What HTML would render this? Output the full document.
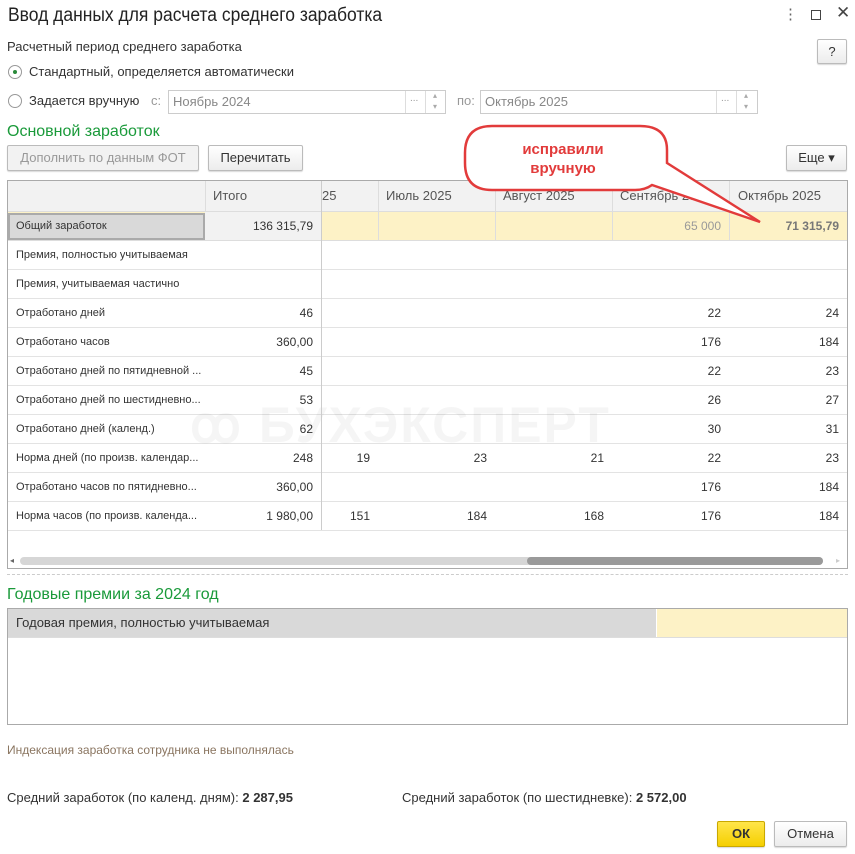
<!DOCTYPE html>
<html><head><meta charset="utf-8"><style>
*{box-sizing:border-box;margin:0;padding:0}
body{width:855px;height:854px;background:#fff;font-family:"Liberation Sans",Arial,sans-serif;font-size:13px;color:#333;position:relative;overflow:hidden}
.a{position:absolute;white-space:nowrap}
.btn{position:absolute;border:1px solid #bbb;border-radius:2px;background:linear-gradient(#fff,#ececec);box-shadow:0 1px 1px rgba(0,0,0,.15);text-align:center;font-size:13px;color:#333}
.inp{position:absolute;border:1px solid #ccc;background:#fff;height:24px;color:#888;padding:3px 4px;font-size:13px}
.row{position:absolute;left:8px;width:839px;height:29px;border-bottom:1px solid #e3e3e3}
.c{position:absolute;top:0;height:29px;line-height:29px;font-size:12px;color:#333}
.l{left:8px;font-size:11px}
.r{text-align:right;padding-right:8px}
.vl{position:absolute;width:1px;background:#ddd;z-index:2}
</style></head><body>
<div class="a" style="left:8px;top:5px;font-size:19px;color:#222;transform:scaleX(.92);transform-origin:left">Ввод данных для расчета среднего заработка</div>
<div class="a" style="left:783px;top:5px;font-size:15px;color:#666">⋮</div>
<div class="a" style="left:811px;top:10px;width:10px;height:10px;border:1px solid #444"></div>
<div class="a" style="left:836px;top:3px;font-size:17px;color:#444">✕</div>
<div class="a" style="left:7px;top:39px">Расчетный период среднего заработка</div>
<div class="btn" style="left:817px;top:39px;width:30px;height:25px;line-height:23px">?</div>
<div class="a" style="left:8px;top:65px;width:14px;height:14px;border:1px solid #999;border-radius:50%"><div style="position:absolute;left:4px;top:4px;width:4px;height:4px;border-radius:50%;background:#2a8a3a"></div></div>
<div class="a" style="left:29px;top:64px">Стандартный, определяется автоматически</div>
<div class="a" style="left:8px;top:94px;width:14px;height:14px;border:1px solid #999;border-radius:50%"></div>
<div class="a" style="left:29px;top:93px">Задается вручную</div>
<div class="a" style="left:151px;top:93px;color:#999">с:</div>
<div class="inp" style="left:168px;top:90px;width:278px">Ноябрь 2024</div>
<div class="a" style="left:405px;top:91px;width:1px;height:22px;background:#ddd"></div><div class="a" style="left:410px;top:93px;color:#999;font-size:10px">...</div>
<div class="a" style="left:425px;top:91px;width:1px;height:22px;background:#ddd"></div><div class="a" style="left:433px;top:90px;color:#aaa;font-size:8px;line-height:11px">▴<br>▾</div>
<div class="a" style="left:457px;top:93px;color:#999">по:</div>
<div class="inp" style="left:480px;top:90px;width:278px">Октябрь 2025</div>
<div class="a" style="left:716px;top:91px;width:1px;height:22px;background:#ddd"></div><div class="a" style="left:721px;top:93px;color:#999;font-size:10px">...</div>
<div class="a" style="left:736px;top:91px;width:1px;height:22px;background:#ddd"></div><div class="a" style="left:744px;top:90px;color:#aaa;font-size:8px;line-height:11px">▴<br>▾</div>
<div class="a" style="left:7px;top:123px;font-size:16px;color:#1a9a3a">Основной заработок</div>
<div class="btn" style="left:7px;top:145px;width:192px;height:26px;line-height:24px;color:#999;background:#f2f2f2">Дополнить по данным ФОТ</div>
<div class="btn" style="left:208px;top:145px;width:95px;height:26px;line-height:24px">Перечитать</div>
<div class="btn" style="left:786px;top:145px;width:61px;height:26px;line-height:24px">Еще ▾</div>

<div class="a" style="left:7px;top:180px;width:841px;height:389px;border:1px solid #aaa"></div>
<div class="a" style="left:8px;top:181px;width:839px;height:31px;background:#f2f2f2;border-bottom:1px solid #ddd"></div>
<div class="vl" style="left:205px;top:181px;height:31px"></div>
<div class="vl" style="left:321px;top:181px;height:349px;background:#ccc"></div>
<div class="vl" style="left:378px;top:181px;height:59px"></div>
<div class="vl" style="left:495px;top:181px;height:59px"></div>
<div class="vl" style="left:612px;top:181px;height:59px"></div>
<div class="vl" style="left:729px;top:181px;height:59px"></div>
<div class="a" style="left:213px;top:188px;color:#555">Итого</div>
<div class="a" style="left:322px;top:188px;color:#555">25</div>
<div class="a" style="left:386px;top:188px;color:#555">Июль 2025</div>
<div class="a" style="left:503px;top:188px;color:#555">Август 2025</div>
<div class="a" style="left:620px;top:188px;color:#555">Сентябрь 2025</div>
<div class="a" style="left:738px;top:188px;color:#555">Октябрь 2025</div>

<div class="row" style="top:212px;background:#fdf2c6">
<div class="c" style="left:0;width:197px;background:#d9d9d9;border:2px solid #aaa;height:27px;line-height:23px;padding-left:6px;font-size:11px;top:1px">Общий заработок</div>
<div class="c r" style="left:197px;width:116px;background:#f2f2f2">136 315,79</div>
<div class="c r" style="left:604px;width:117px;color:#999">65 000</div>
<div class="c r" style="left:721px;width:118px;color:#777;font-weight:bold">71 315,79</div>
</div>
<div class="a" style="left:8px;top:240px;width:839px;height:1px;background:#ddd"></div>

<div class="row" style="top:241px"><div class="c l">Премия, полностью учитываемая</div></div>
<div class="row" style="top:270px"><div class="c l">Премия, учитываемая частично</div></div>
<div class="row" style="top:299px"><div class="c l">Отработано дней</div><div class="c r" style="left:197px;width:116px">46</div><div class="c r" style="left:604px;width:117px">22</div><div class="c r" style="left:721px;width:118px">24</div></div>
<div class="row" style="top:328px"><div class="c l">Отработано часов</div><div class="c r" style="left:197px;width:116px">360,00</div><div class="c r" style="left:604px;width:117px">176</div><div class="c r" style="left:721px;width:118px">184</div></div>
<div class="row" style="top:357px"><div class="c l">Отработано дней по пятидневной ...</div><div class="c r" style="left:197px;width:116px">45</div><div class="c r" style="left:604px;width:117px">22</div><div class="c r" style="left:721px;width:118px">23</div></div>
<div class="row" style="top:386px"><div class="c l">Отработано дней по шестидневно...</div><div class="c r" style="left:197px;width:116px">53</div><div class="c r" style="left:604px;width:117px">26</div><div class="c r" style="left:721px;width:118px">27</div></div>
<div class="row" style="top:415px"><div class="c l">Отработано дней (календ.)</div><div class="c r" style="left:197px;width:116px">62</div><div class="c r" style="left:604px;width:117px">30</div><div class="c r" style="left:721px;width:118px">31</div></div>
<div class="row" style="top:444px"><div class="c l">Норма дней (по произв. календар...</div><div class="c r" style="left:197px;width:116px">248</div><div class="c r" style="left:313px;width:57px">19</div><div class="c r" style="left:370px;width:117px">23</div><div class="c r" style="left:487px;width:117px">21</div><div class="c r" style="left:604px;width:117px">22</div><div class="c r" style="left:721px;width:118px">23</div></div>
<div class="row" style="top:473px"><div class="c l">Отработано часов по пятидневно...</div><div class="c r" style="left:197px;width:116px">360,00</div><div class="c r" style="left:604px;width:117px">176</div><div class="c r" style="left:721px;width:118px">184</div></div>
<div class="row" style="top:502px"><div class="c l">Норма часов (по произв. календа...</div><div class="c r" style="left:197px;width:116px">1 980,00</div><div class="c r" style="left:313px;width:57px">151</div><div class="c r" style="left:370px;width:117px">184</div><div class="c r" style="left:487px;width:117px">168</div><div class="c r" style="left:604px;width:117px">176</div><div class="c r" style="left:721px;width:118px">184</div></div>

<div class="a" style="left:190px;top:396px;font-size:50px;font-weight:bold;color:#000;opacity:.035;letter-spacing:2px">ꝏ БУХЭКСПЕРТ</div>

<div class="a" style="left:10px;top:556px;font-size:8px;color:#666">◂</div>
<div class="a" style="left:20px;top:557px;width:803px;height:8px;border-radius:4px;background:#d6d6d6"></div>
<div class="a" style="left:527px;top:557px;width:296px;height:8px;border-radius:4px;background:#9a9a9a"></div>
<div class="a" style="left:836px;top:556px;font-size:8px;color:#ccc">▸</div>
<div class="a" style="left:7px;top:574px;width:841px;border-top:1px dashed #ccc"></div>

<div class="a" style="left:7px;top:586px;font-size:16px;color:#1a9a3a">Годовые премии за 2024 год</div>
<div class="a" style="left:7px;top:608px;width:841px;height:117px;border:1px solid #aaa"></div>
<div class="a" style="left:8px;top:609px;width:648px;height:28px;background:#d9d9d9;line-height:28px;padding-left:8px;font-size:13px">Годовая премия, полностью учитываемая</div>
<div class="a" style="left:657px;top:609px;width:190px;height:28px;background:#fdf2c6"></div>
<div class="a" style="left:8px;top:637px;width:839px;height:1px;background:#ddd"></div>

<div class="a" style="left:7px;top:743px;font-size:12px;color:#8a7560">Индексация заработка сотрудника не выполнялась</div>
<div class="a" style="left:7px;top:790px">Средний заработок (по календ. дням): <b>2 287,95</b></div>
<div class="a" style="left:402px;top:790px">Средний заработок (по шестидневке): <b>2 572,00</b></div>
<div class="btn" style="left:717px;top:821px;width:48px;height:26px;line-height:24px;background:linear-gradient(#ffe54a,#f5cf00);border-color:#c9a800;font-weight:bold">ОК</div>
<div class="btn" style="left:774px;top:821px;width:73px;height:26px;line-height:24px">Отмена</div>

<svg class="a" style="left:0;top:0;z-index:5" width="855" height="854">
<path d="M492,126 L640,126 Q667,126 667,150 L667,163 L760,222 L652,185 Q645,190 635,190 L492,190 Q465,190 465,163 L465,153 Q465,126 492,126 Z" fill="#fff" stroke="#e23b3b" stroke-width="2.5"/>
<text x="563" y="154" text-anchor="middle" fill="#e23b3b" font-family="Liberation Sans" font-weight="bold" font-size="15">исправили</text>
<text x="563" y="173" text-anchor="middle" fill="#e23b3b" font-family="Liberation Sans" font-weight="bold" font-size="15">вручную</text>
</svg>
</body></html>
